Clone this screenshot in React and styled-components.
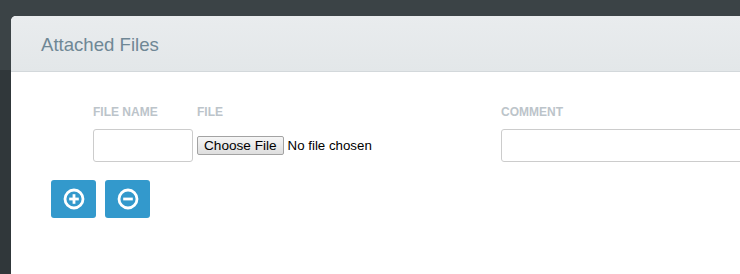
import React from 'react';
import styled, { createGlobalStyle } from 'styled-components';

const GlobalStyle = createGlobalStyle`
  html, body {
    margin: 0;
    padding: 0;
    height: 100%;
    background: #3b4346;
    font-family: "Liberation Sans", Arial, sans-serif;
    overflow: hidden;
  }
  #root {
    height: 100%;
  }
`;

const Backdrop = styled.div`
  height: 100%;
  padding: 16px 0 0 11px;
  box-sizing: border-box;
  background: linear-gradient(to bottom, #3b4346 0, #3b4346 70px, #30373a 70px);
`;

const Modal = styled.div`
  height: 100%;
  background: #fff;
  border-top-left-radius: 5px;
  overflow: hidden;
`;

const Header = styled.div`
  height: 55px;
  display: flex;
  align-items: center;
  padding-left: 30px;
  background: linear-gradient(to bottom, #e9ecee, #e3e7e9);
  border-bottom: 1px solid #d3d8db;
`;

const Title = styled.h3`
  margin: 3px 0 0;
  font-size: 18.6px;
  font-weight: normal;
  color: #6f8795;
`;

const Body = styled.div`
  padding: 32px 0 0 40px;
`;

const FieldGrid = styled.div`
  display: grid;
  grid-template-columns: 100px 300px 260px;
  column-gap: 4px;
  padding-left: 42px;
`;

const Field = styled.div`
  display: flex;
  flex-direction: column;
`;

const Label = styled.label`
  font-size: 12px;
  font-weight: bold;
  color: #bcc4ca;
  line-height: 15px;
  margin: 1px 0 9px;
`;

const TextInput = styled.input`
  box-sizing: border-box;
  width: ${(p) => p.$width || '100%'};
  height: 33px;
  border: 1px solid #cccccc;
  border-radius: 3px;
  padding: 4px 6px;
  font-size: 13px;
  outline: none;
`;

const FileRow = styled.div`
  height: 33px;
  display: flex;
  align-items: center;
`;

const FileButton = styled.span`
  display: inline-block;
  box-sizing: border-box;
  height: 19px;
  padding: 0 6px;
  line-height: 17px;
  font-size: 13.6px;
  color: #000;
  border: 1px solid #a3a3a3;
  border-radius: 2px;
  background: linear-gradient(to bottom, #f6f6f6, #dedede);
`;

const FileStatus = styled.span`
  margin-left: 4px;
  font-size: 13.3px;
  color: #000;
`;

const Actions = styled.div`
  display: flex;
  gap: 9px;
  margin-top: 18px;
`;

const IconButton = styled.button`
  width: 45px;
  height: 38px;
  padding: 0;
  border: none;
  border-radius: 3px;
  background: #3399cc;
  display: flex;
  align-items: center;
  justify-content: center;
  cursor: pointer;
`;

const CircleIcon = ({ plus }) => (
  <svg width="22" height="22" viewBox="0 0 22 22">
    <circle cx="11" cy="11" r="9" fill="none" stroke="#fff" strokeWidth="2.8" />
    <rect x="6.2" y="9.6" width="9.6" height="2.8" fill="#fff" />
    {plus && <rect x="9.6" y="6.2" width="2.8" height="9.6" fill="#fff" />}
  </svg>
);

export default function App() {
  return (
    <>
      <GlobalStyle />
      <Backdrop>
        <Modal>
          <Header>
            <Title>Attached Files</Title>
          </Header>
          <Body>
            <FieldGrid>
              <Field>
                <Label>FILE NAME</Label>
                <TextInput type="text" $width="100px" />
              </Field>
              <Field>
                <Label>FILE</Label>
                <FileRow>
                  <FileButton>Choose File</FileButton>
                  <FileStatus>No file chosen</FileStatus>
                </FileRow>
              </Field>
              <Field>
                <Label>COMMENT</Label>
                <TextInput type="text" />
              </Field>
            </FieldGrid>
            <Actions>
              <IconButton aria-label="Add file">
                <CircleIcon plus />
              </IconButton>
              <IconButton aria-label="Remove file">
                <CircleIcon />
              </IconButton>
            </Actions>
          </Body>
        </Modal>
      </Backdrop>
    </>
  );
}
